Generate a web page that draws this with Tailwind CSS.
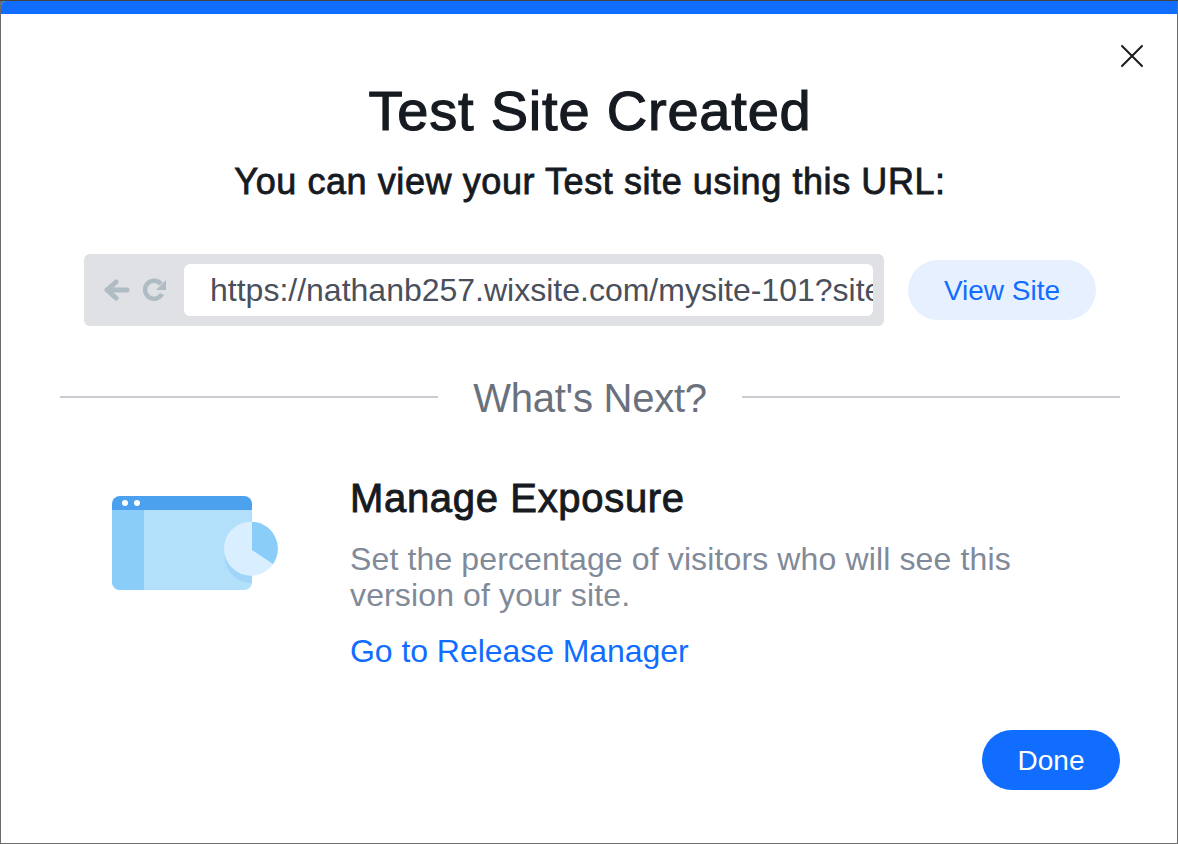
<!DOCTYPE html>
<html>
<head>
<meta charset="utf-8">
<script src="https://cdn.jsdelivr.net/npm/@tailwindcss/browser@4"></script>
</head>
<body class="bg-[#555555] font-['Liberation_Sans',Arial,sans-serif]">
<div class="w-[1178px] h-[844px] overflow-hidden bg-[#6b6b6b] border-t border-[#444444] pr-px pb-px pl-px">
    <div class="relative w-full h-full bg-white rounded-tl-[5px] overflow-hidden flex flex-col">
        <!-- top bar -->
        <div class="h-[13px] bg-[#116dff] shrink-0"></div>

        <button class="absolute left-[1119px] top-[43px] w-6 h-6 text-[#1a1a1a]">
            <svg width="24" height="24" viewBox="0 0 24 24" fill="none" stroke="currentColor" stroke-width="2" stroke-linecap="round"><path d="M2 2L22 22M22 2L2 22"/></svg>
        </button>

        <h1 class="mt-[67px] text-center text-[56px] leading-[60px] font-normal tracking-[0.8px] [-webkit-text-stroke:1.2px_#161a21] text-[#161a21] pl-[2px]">Test Site Created</h1>
        <p class="mt-[21px] text-center text-[36px] leading-[40px] font-normal tracking-[0.58px] [-webkit-text-stroke:0.8px_#161a21] text-[#161a21] pl-[2px]">You can view your Test site using this URL:</p>

        <!-- url row -->
        <div class="mt-[52px] ml-[83px] flex items-center">
            <div class="w-[800px] h-[72px] bg-[#dfe1e5] rounded-[6px] flex items-center pl-[20px]">
                <svg width="26" height="24" viewBox="0 0 26 24" fill="none" stroke="#b0bcc4" stroke-width="5" stroke-linecap="round" stroke-linejoin="round"><path d="M3 12H23M12 4L3 12L12 20"/></svg>
                <svg class="ml-[12px]" width="26" height="24" viewBox="0 0 26 24" fill="none"><path d="M20 16A9 9 0 1 1 19 6" stroke="#b0bcc4" stroke-width="4.5"/><path d="M24 2V12H14Z" fill="#b0bcc4"/></svg>
                <div class="ml-[16px] w-[689px] h-[52px] bg-white rounded-[6px] overflow-hidden pl-[26px] text-[32px] leading-[52px] text-[#4a4f5c] whitespace-nowrap">https://nathanb257.wixsite.com/mysite-101?site</div>
            </div>
            <button class="ml-[24px] w-[188px] h-[60px] pt-px rounded-full bg-[#e7f0ff] text-[#116dff] text-[28px]">View Site</button>
        </div>

        <!-- divider -->
        <div class="mt-[44px] ml-[59px] mr-[57px] flex items-center">
            <div class="h-0.5 bg-[#c9ccd1] flex-1"></div>
            <span class="px-[35px] pt-[2px] text-[40px] leading-[52px] tracking-[-0.25px] text-[#6a717c]">What's Next?</span>
            <div class="h-0.5 bg-[#c9ccd1] flex-1"></div>
        </div>

        <!-- next step -->
        <div class="mt-[48px] flex">
            <svg class="ml-[111px] mt-[24px]" width="168" height="96" viewBox="0 0 168 96">
                <path d="M0 12H140V86a8 8 0 0 1-8 8H8a8 8 0 0 1-8-8Z" fill="#b2e0fb"/>
                <path d="M0 12H32V94H8a8 8 0 0 1-8-8Z" fill="#8bcdf9"/>
                <path d="M0 14V8a8 8 0 0 1 8-8H132a8 8 0 0 1 8 8V14Z" fill="#4ba1ed"/>
                <circle cx="13" cy="7" r="3" fill="#fff"/>
                <circle cx="25" cy="7" r="3" fill="#fff"/>
                <path d="M140 87A27 27 0 0 1 116 47L140 47Z" fill="#9ed5f9"/>
                <circle cx="139" cy="52.7" r="27" fill="#d9eefe"/>
                <path d="M140 25.7A27 27 0 0 1 161 68L140 54Z" fill="#8bcdf9"/>
            </svg>
            <div class="ml-[70px]">
                <h2 class="mt-[4px] text-[40px] leading-[44px] font-normal tracking-[0.67px] [-webkit-text-stroke:0.9px_#161a21] text-[#161a21]">Manage Exposure</h2>
                <p class="mt-[21px] w-[690px] text-[32px] leading-[36px] tracking-[0.13px] text-[#818a99]">Set the percentage of visitors who will see this version of your site.</p>
                <a class="block mt-[19px] text-[32px] leading-[38px] tracking-[-0.05px] text-[#116dff]">Go to Release Manager</a>
            </div>
        </div>

        <button class="absolute left-[981px] top-[729px] w-[138px] h-[60px] pt-px rounded-full bg-[#116dff] text-white text-[28px]">Done</button>
    </div>
</div>
</body>
</html>
